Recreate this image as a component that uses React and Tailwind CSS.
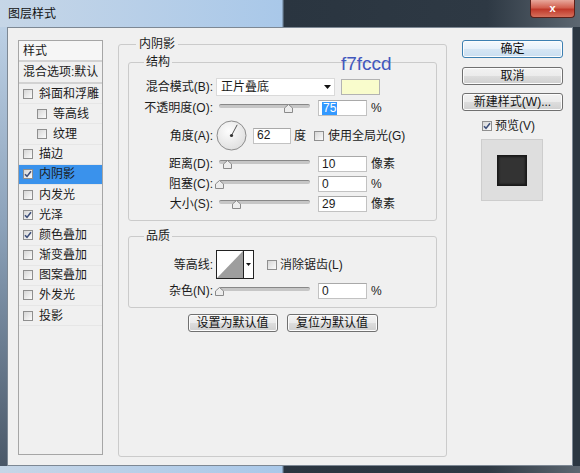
import React from "react";
import clsx from "clsx";

const effects = [
  { label: "斜面和浮雕" },
  { label: "等高线", indent: true },
  { label: "纹理", indent: true },
  { label: "描边" },
  { label: "内阴影", checked: true, active: true },
  { label: "内发光" },
  { label: "光泽", checked: true },
  { label: "颜色叠加", checked: true },
  { label: "渐变叠加" },
  { label: "图案叠加" },
  { label: "外发光" },
  { label: "投影" },
];

const Check = ({ checked }) => (
  <span className="w-[10px] h-[10px] shrink-0 border border-[#8f8f8f] bg-[linear-gradient(135deg,#d6d6d6,#fbfbfb)] flex items-center justify-center">
    {checked && (
      <svg width="8" height="8" viewBox="0 0 8 8">
        <path d="M1 4.3 L3 6.4 L7 1.3" fill="none" stroke="#3d4f7a" strokeWidth="1.6" />
      </svg>
    )}
  </span>
);

const Label = ({ children }) => (
  <span className="w-[84px] shrink-0 text-right whitespace-nowrap">{children}</span>
);

// pos = thumb centre, px from the left end of the track
const Slider = ({ pos }) => (
  <div className="relative w-[91px] h-[16px] ml-[6px] shrink-0">
    <div className="mt-[4px] h-[4px] rounded-[2px] bg-[#c6c6c6] border-t border-[#888]" />
    <svg
      className="absolute top-[4px]"
      style={{ left: pos - 4.5 }}
      width="9"
      height="9"
      viewBox="0 0 9 9"
    >
      <path d="M0.5 8.5 V4 L4.5 0.5 L8.5 4 V8.5 Z" fill="#ededed" stroke="#8a8a8a" />
    </svg>
  </div>
);

const Field = ({ value, selected, className }) => (
  <div
    className={clsx(
      "h-[16px] shrink-0 bg-white border border-[#c2c2c2] border-t-[#a9a9a9] flex items-center pl-[3px] leading-[13px]",
      className
    )}
  >
    <span className={selected ? "bg-[#3399ff] text-white px-[1px]" : ""}>{value}</span>
  </div>
);

const SliderRow = ({ label, pos, value, unit, selected, className }) => (
  <div className={clsx("h-[16px] flex items-center", className)}>
    <Label>{label}</Label>
    <Slider pos={pos} />
    <Field value={value} selected={selected} className="w-[49px] ml-[8px]" />
    <span className="ml-[4px]">{unit}</span>
  </div>
);

const Button = ({ children, primary, className }) => (
  <button
    className={clsx(
      "h-[18px] rounded-[3px] border text-[12px] leading-[14px] text-[#111] shadow-[inset_0_0_0_1px_#fcfcfc]",
      primary
        ? "border-[#3c7fb1] bg-[linear-gradient(180deg,#f4f9fd_0%,#e6f0f9_50%,#d6e6f4_51%,#c9def0_100%)]"
        : "border-[#707070] bg-[linear-gradient(180deg,#f2f2f2_0%,#ebebeb_50%,#dddddd_51%,#cfcfcf_100%)]",
      className
    )}
  >
    {children}
  </button>
);

const StyleList = () => (
  <div className="w-[85px] h-[415px] mt-[12px] shrink-0 border border-[#a6a6a6] bg-[#f0f0f0] flex flex-col overflow-hidden">
    <div className="h-[21px] flex items-center pl-[4px] bg-[#f6f6f6] border-b-2 border-[#d2d2d2]">样式</div>
    <div className="h-[22px] flex items-center pl-[4px] whitespace-nowrap border-b-2 border-[#d2d2d2]">
      混合选项:默认
    </div>
    {effects.map((e) => (
      <div
        key={e.label}
        className={clsx(
          "h-[20.2px] flex items-center gap-[6px] whitespace-nowrap border-b border-[#e6e6e6]",
          e.indent ? "pl-[18px]" : "pl-[4px]",
          e.active && "bg-[#3a92ec]"
        )}
      >
        <Check checked={e.checked} />
        <span>{e.label}</span>
      </div>
    ))}
  </div>
);

const Dial = () => (
  <svg width="31" height="31" viewBox="0 0 31 31" className="ml-[3px] shrink-0">
    <defs>
      <radialGradient id="dialBg" cx="0.4" cy="0.35" r="0.7">
        <stop offset="0" stopColor="#fdfdfd" />
        <stop offset="1" stopColor="#dedede" />
      </radialGradient>
    </defs>
    <circle cx="15.5" cy="15.5" r="14.5" fill="url(#dialBg)" stroke="#8c8c8c" />
    <line x1="15.5" y1="15.5" x2="21.2" y2="4.8" stroke="#555" strokeWidth="1" />
    <circle cx="15.5" cy="15.5" r="1.6" fill="#333" />
  </svg>
);

const Contour = () => (
  <svg width="38" height="29" viewBox="0 0 38 29" className="ml-[3px] shrink-0">
    <rect x="0.5" y="0.5" width="37" height="28" fill="#fff" stroke="#222" />
    <path d="M1 28 L27 1 L27 28 Z" fill="#9e9e9e" />
    <line x1="27.5" y1="1" x2="27.5" y2="28" stroke="#222" />
    <path d="M30 13 L35 13 L32.5 16 Z" fill="#111" />
  </svg>
);

const Middle = () => (
  <fieldset className="w-[329px] h-[420px] mt-[9px] ml-[15px] shrink-0 border border-[#cbcbcb] rounded-[3px] px-[9px]">
    <legend className="ml-[8px] px-[3px] leading-[14px]">内阴影</legend>

    <fieldset className="mt-[4px] border border-[#cbcbcb] rounded-[3px] pb-[8px]">
      <legend className="ml-[15px] px-[2px] leading-[14px]">结构</legend>
      <div className="h-[18px] mt-[9px] flex items-center">
        <Label>混合模式(B):</Label>
        <div className="w-[119px] h-[18px] ml-[3px] shrink-0 bg-white border border-[#dadada] flex items-center justify-between pl-[4px] pr-[3px]">
          <span>正片叠底</span>
          <svg width="7" height="4" viewBox="0 0 7 4">
            <path d="M0 0 H7 L3.5 4 Z" fill="#111" />
          </svg>
        </div>
        <div className="w-[39px] h-[16px] ml-[6px] shrink-0 border border-[#b3b3b3] bg-[#f9fccc]" />
      </div>
      <SliderRow label="不透明度(O):" pos={69} value="75" unit="%" selected className="mt-[4px]" />
      <div className="h-[31px] mt-[4px] flex items-center">
        <Label>角度(A):</Label>
        <Dial />
        <Field value="62" className="w-[38px] ml-[6px]" />
        <span className="ml-[3px]">度</span>
        <span className="ml-[8px]">
          <Check />
        </span>
        <span className="ml-[4px] whitespace-nowrap">使用全局光(G)</span>
      </div>
      <SliderRow label="距离(D):" pos={8} value="10" unit="像素" className="mt-[5px]" />
      <SliderRow label="阻塞(C):" pos={0} value="0" unit="%" className="mt-[4px]" />
      <SliderRow label="大小(S):" pos={17} value="29" unit="像素" className="mt-[4px]" />
    </fieldset>

    <fieldset className="mt-[8px] border border-[#cbcbcb] rounded-[3px] pb-[8px]">
      <legend className="ml-[15px] px-[2px] leading-[14px]">品质</legend>
      <div className="h-[29px] mt-[7px] flex items-center">
        <Label>等高线:</Label>
        <Contour />
        <span className="ml-[13px]">
          <Check />
        </span>
        <span className="ml-[3px] whitespace-nowrap">消除锯齿(L)</span>
      </div>
      <SliderRow label="杂色(N):" pos={0} value="0" unit="%" className="mt-[4px]" />
    </fieldset>

    <div className="mt-[6px] flex justify-center gap-[9px]">
      <Button className="w-[90px]">设置为默认值</Button>
      <Button className="w-[91px]">复位为默认值</Button>
    </div>
  </fieldset>
);

const Side = () => (
  <div className="w-[101px] ml-[15px] mt-[12px] shrink-0 flex flex-col">
    <Button primary className="w-full">确定</Button>
    <Button className="w-full mt-[9px]">取消</Button>
    <Button className="w-full mt-[8px] whitespace-nowrap">新建样式(W)...</Button>
    <div className="mt-[8px] h-[14px] ml-[20px] flex items-center gap-[3px]">
      <Check checked />
      <span>预览(V)</span>
    </div>
    <div className="mt-[6px] ml-[19px] w-[62px] h-[62px] bg-[#dedede] border border-[#cdcdcd] flex items-center justify-center">
      <div className="w-[30px] h-[31px] bg-[#333] shadow-[inset_0_0_2px_2px_#1a1a1a]" />
    </div>
  </div>
);

export default function App() {
  return (
    <div className="relative w-[580px] h-[473px] overflow-hidden text-[12px] leading-[14px] text-[#1b1b1b] font-['Liberation_Sans','Noto_Sans_CJK_SC',sans-serif] bg-[linear-gradient(90deg,#c6d6e7_0%,#a9c8e9_48.6%,#2a3540_49%,#2e3944_84%,#5d6771_100%)]">
      <div className="h-[27px] flex items-center pl-[8px] text-[#111]">图层样式</div>
      <div className="absolute left-[530px] top-0 w-[45px] h-[18px] rounded-b-[4px] border border-t-0 border-[#5c2019] bg-[linear-gradient(180deg,#e8a89c_0%,#d2604f_45%,#c0392a_55%,#d7705c_100%)] flex items-center justify-center text-white font-bold text-[11px] leading-none">
        x
      </div>

      <div className="flex h-[439px]">
        <div className="w-[7px] bg-[linear-gradient(180deg,#bcd0e5_0%,#8ca2ba_45%,#4a5868_100%)]" />
        <div className="w-[566px] bg-[#f0f0f0] border border-[#7d8894] flex items-start pl-[10px]">
          <StyleList />
          <Middle />
          <Side />
        </div>
        <div className="w-[7px] bg-[#2c3742]" />
      </div>

      <div className="absolute left-[341px] top-[54px] text-[19px] leading-[20px] text-[#4157bd] font-['Liberation_Sans',sans-serif]">
        f7fccd
      </div>
    </div>
  );
}
